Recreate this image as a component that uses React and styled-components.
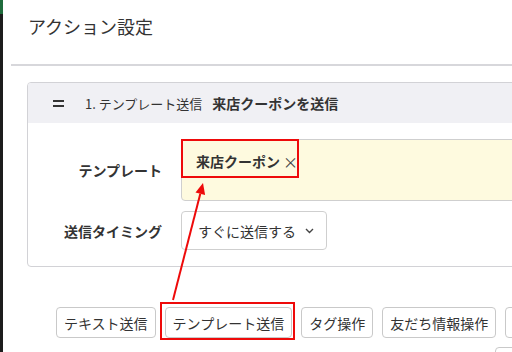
import React from 'react';
import styled, { createGlobalStyle } from 'styled-components';

const GlobalStyle = createGlobalStyle`
  html, body {
    margin: 0;
    padding: 0;
    overflow: hidden;
    background: #fff;
  }
  body {
    font-family: "Noto Sans CJK JP", "Noto Sans", sans-serif;
    color: #333;
  }
`;

const Page = styled.div`
  position: relative;
  display: flex;
  width: 760px;
  height: 352px;
`;

const Strip = styled.div`
  width: 3px;
  flex-shrink: 0;
  background: linear-gradient(#1f6b3c 0, #1f6b3c 14px, #1d1d1d 14px);
`;

const Main = styled.div`
  flex: 1;
  padding-left: 8px;
`;

const TitleBar = styled.div`
  display: flex;
  align-items: center;
  box-sizing: border-box;
  height: 66px;
  padding: 0 0 12px 17px;
  border-bottom: 2px solid #d7d7db;
`;

const Title = styled.h1`
  margin: 0;
  font-size: 18px;
  font-weight: 400;
  color: #333;
`;

const Section = styled.div`
  padding: 16px 0 0 16px;
`;

const Card = styled.div`
  width: 620px;
  border: 1px solid #d2d2d6;
  border-radius: 4px;
  overflow: hidden;
`;

const CardHeader = styled.div`
  height: 40px;
  display: flex;
  align-items: center;
  padding-left: 25px;
  background: #f0f0f4;
  font-size: 13px;
`;

const Handle = styled.span`
  display: inline-flex;
  flex-direction: column;
  gap: 3px;
  width: 11px;
  margin-right: 21px;
  span {
    height: 2px;
    background: #333;
  }
`;

const StepName = styled.span`
  color: #333;
  margin-right: 10px;
`;

const ActionName = styled.span`
  font-weight: 700;
  font-size: 14px;
  color: #333;
`;

const CardBody = styled.div`
  display: grid;
  grid-template-columns: 134px 1fr;
  column-gap: 19px;
  row-gap: 10px;
  padding: 16px 0 16px;
  align-items: center;
`;

const Label = styled.div`
  text-align: right;
  font-size: 14px;
  font-weight: 700;
  color: #333;
`;

const TagBox = styled.div`
  position: relative;
  height: 62px;
  box-sizing: border-box;
  border: 1px solid #cfcfcf;
  border-radius: 4px;
  background: #fefadf;
  padding: 8px 14px 0;
`;

const Tag = styled.span`
  display: inline-flex;
  align-items: center;
  height: 22px;
  font-size: 14px;
  font-weight: 700;
  color: #333;
`;

const Remove = styled.span`
  margin-left: 3px;
  font-weight: 400;
  color: #444;
  font-size: 15px;
`;

const Highlight = styled.div`
  position: absolute;
  top: ${p => p.$top}px;
  left: ${p => p.$left}px;
  width: ${p => p.$width}px;
  height: ${p => p.$height}px;
  border: 2px solid #ee0a0a;
  box-sizing: border-box;
  pointer-events: none;
`;

const Select = styled.div`
  width: 146px;
  height: 39px;
  box-sizing: border-box;
  display: flex;
  align-items: center;
  justify-content: space-between;
  padding: 0 12px 0 16px;
  border: 1px solid #cfcfcf;
  border-radius: 4px;
  background: #fff;
  font-size: 14px;
  color: #333;
`;

const ButtonArea = styled.div`
  padding: 40px 0 0 45px;
  display: flex;
  flex-direction: column;
  gap: 9px;
`;

const ButtonRow = styled.div`
  display: flex;
  gap: 9px;
  padding-left: ${p => p.$indent || 0}px;
`;

const ButtonWrap = styled.span`
  position: relative;
  display: inline-flex;
`;

const Button = styled.button`
  height: 31px;
  padding: 0 7px;
  border: 1px solid #c9c9c9;
  border-radius: 4px;
  background: #fff;
  font-family: inherit;
  font-size: 14px;
  color: #333;
  white-space: nowrap;
`;

const ArrowLayer = styled.svg`
  position: absolute;
  left: 0;
  top: 0;
  pointer-events: none;
`;

const Chevron = () => (
  <svg width="9" height="6" viewBox="0 0 9 6">
    <polyline points="1,1 4.5,4.5 8,1" fill="none" stroke="#444" strokeWidth="1.4" />
  </svg>
);

const actions = ['テキスト送信', 'テンプレート送信', 'タグ操作', '友だち情報操作', 'ステップ配信'];

export default function App() {
  return (
    <>
      <GlobalStyle />
      <Page>
        <Strip />
        <Main>
          <TitleBar>
            <Title>アクション設定</Title>
          </TitleBar>
          <Section>
            <Card>
              <CardHeader>
                <Handle><span /><span /></Handle>
                <StepName>1. テンプレート送信</StepName>
                <ActionName>来店クーポンを送信</ActionName>
              </CardHeader>
              <CardBody>
                <Label>テンプレート</Label>
                <TagBox>
                  <Tag>来店クーポン<Remove>×</Remove></Tag>
                  <Highlight $top={-1} $left={-1} $width={118} $height={39} />
                </TagBox>
                <Label>送信タイミング</Label>
                <div>
                  <Select>
                    すぐに送信する
                    <Chevron />
                  </Select>
                </div>
              </CardBody>
            </Card>
          </Section>
          <ButtonArea>
            <ButtonRow>
              {actions.map(a => (
                <ButtonWrap key={a}>
                  <Button>{a}</Button>
                  {a === 'テンプレート送信' && (
                    <Highlight $top={-5} $left={-5} $width={135} $height={38} />
                  )}
                </ButtonWrap>
              ))}
            </ButtonRow>
            <ButtonRow $indent={439}>
              <Button>リッチメニュー操作</Button>
            </ButtonRow>
          </ButtonArea>
        </Main>
        <ArrowLayer width="512" height="352">
          <line x1="173" y1="300" x2="200.3" y2="193.7" stroke="#ee0a0a" strokeWidth="2" />
          <polygon points="203,183 205.1,194.9 195.5,192.5" fill="#ee0a0a" />
        </ArrowLayer>
      </Page>
    </>
  );
}
